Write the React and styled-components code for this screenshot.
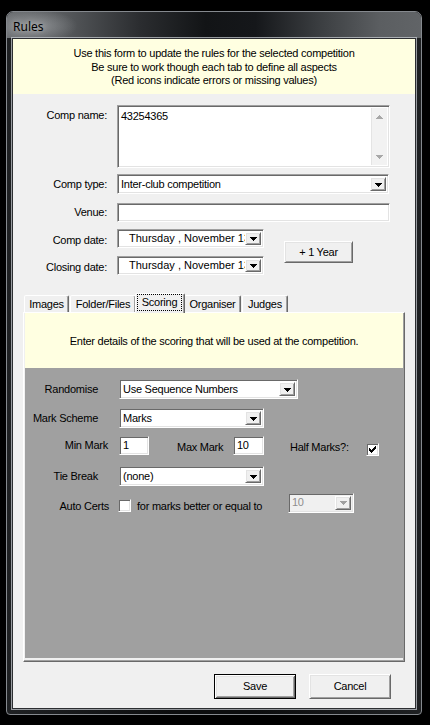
import React from "react";
import styled, { createGlobalStyle, css } from "styled-components";

const GlobalStyle = createGlobalStyle`
  html, body { margin: 0; padding: 0; background: #000; }
  body {
    font-family: "Liberation Sans", Arial, sans-serif;
    font-size: 11px;
    letter-spacing: -0.25px;
    line-height: 13px;
    color: #000;
  }
  *, *::before, *::after { box-sizing: border-box; }
`;

/* classic 3D edges */
const sunken = css`
  border: 1px solid;
  border-color: #a0a0a0 #ffffff #ffffff #a0a0a0;
  box-shadow: inset 1px 1px 0 #696969, inset -1px -1px 0 #e3e3e3;
`;

const raised = css`
  background: #f0f0f0;
  border: 1px solid;
  border-color: #ffffff #696969 #696969 #ffffff;
  box-shadow: inset 1px 1px 0 #e3e3e3, inset -1px -1px 0 #a0a0a0;
`;

const Screen = styled.div`
  width: 430px;
  height: 725px;
  padding: 11px 0 0 6px;
  background: #000;
  overflow: hidden;
`;

const Window = styled.div`
  width: 416px;
  height: 704px;
  display: flex;
  flex-direction: column;
  border: 1px solid #85898e;
  border-radius: 7px 7px 4px 4px;
  overflow: hidden;
  background: linear-gradient(to right, #1f2123 0%, #0c0d0e 40%, #0c0d0e 60%, #1f2123 100%);
`;

const TitleBar = styled.div`
  height: 26px;
  flex: none;
  display: flex;
  align-items: center;
  padding: 2px 0 0 6px;
  background:
    radial-gradient(62px 24px at 27px 14px, rgba(178, 181, 184, 0.6), rgba(178, 181, 184, 0) 70%),
    linear-gradient(to right, #6a6d70 0%, #56595c 14%, #2b2d30 32%, #121416 48%, #15171a 60%, #3c3f42 76%, #5b5e61 90%, #616467 100%);
`;

const Title = styled.span`
  font-family: "Noto Sans", "Open Sans", sans-serif;
  font-size: 12px;
  letter-spacing: 0;
  color: #000;
  text-shadow: 0 0 6px rgba(255, 255, 255, 0.55);
`;

const Client = styled.div`
  flex: 1;
  margin: 0 5px 5px;
  display: flex;
  flex-direction: column;
  background: #f0f0f0;
  border: 1px solid #2c2e31;
  box-shadow: 0 0 0 1px rgba(205, 210, 215, 0.7);
`;

const Banner = styled.div`
  height: ${(p) => p.$h}px;
  flex: none;
  padding-top: ${(p) => p.$pt}px;
  background: #ffffe1;
  text-align: center;
  line-height: 13.5px;
`;

const Form = styled.div`
  display: flex;
  flex-direction: column;
  padding: 11px 25px 0 0;
`;

const FieldRow = styled.div`
  display: flex;
  align-items: ${(p) => (p.$top ? "flex-start" : "center")};
  margin-top: ${(p) => p.$mt || 0}px;
`;

const FieldLabel = styled.span`
  width: 94px;
  flex: none;
  margin-right: 10px;
  text-align: right;
  white-space: nowrap;
  padding-top: ${(p) => p.$pt || 0}px;
`;

const Memo = styled.div`
  ${sunken};
  flex: 1;
  height: 63px;
  background: #fff;
  display: flex;
  padding: 2px;
`;

const MemoText = styled.div`
  flex: 1;
  padding: 2px 1px;
`;

const VScroll = styled.div`
  width: 16px;
  flex: none;
  display: flex;
  flex-direction: column;
  justify-content: space-between;
  background: #f2f2f2;
  border-left: 1px solid #e4e4e4;
`;

const ScrollBtn = styled.span`
  height: 17px;
  display: flex;
  align-items: center;
  justify-content: center;
`;

const Combo = styled.div`
  ${sunken};
  height: ${(p) => p.$h || 20}px;
  width: ${(p) => (p.$w ? `${p.$w}px` : "auto")};
  flex: ${(p) => (p.$w ? "none" : "1")};
  margin-right: ${(p) => p.$mr || 0}px;
  background: ${(p) => (p.$disabled ? "#f0f0f0" : "#fff")};
  display: flex;
  align-items: stretch;
  padding: 2px;
`;

const ComboText = styled.span`
  flex: 1;
  display: flex;
  align-items: center;
  padding-left: ${(p) => p.$pl ?? 1}px;
  white-space: pre;
  overflow: hidden;
  letter-spacing: ${(p) => (p.$wide ? "0" : "inherit")};
  color: ${(p) => (p.$disabled ? "#8e8e8e" : "#000")};
`;

const DropButton = styled.span`
  ${raised};
  width: 16px;
  flex: none;
  display: flex;
  align-items: center;
  justify-content: center;
  padding-top: 1px;
`;

const TextBox = styled.div`
  ${sunken};
  height: 19px;
  width: ${(p) => (p.$w ? `${p.$w}px` : "auto")};
  flex: ${(p) => (p.$w ? "none" : "1")};
  background: #fff;
  display: flex;
  align-items: center;
  padding: 0 3px;
`;

const DateGroup = styled.div`
  display: flex;
  align-items: center;
  margin-top: ${(p) => p.$mt || 0}px;
`;

const DateColumn = styled.div`
  display: flex;
  flex-direction: column;
`;

const PushButton = styled.button`
  ${raised};
  width: ${(p) => p.$w}px;
  height: ${(p) => p.$h}px;
  margin-left: ${(p) => p.$ml || 0}px;
  padding: 0;
  font: inherit;
  letter-spacing: inherit;
  color: #000;
  ${(p) =>
    p.$default &&
    css`
      border-color: #000;
      box-shadow: inset 1px 1px 0 #fff, inset -1px -1px 0 #696969, inset 2px 2px 0 #e3e3e3,
        inset -2px -2px 0 #a0a0a0;
    `}
`;

const TabArea = styled.div`
  display: flex;
  flex-direction: column;
  margin: 18px 10px 0;
`;

const TabStrip = styled.div`
  display: flex;
  align-items: flex-end;
  height: 19px;
  padding-left: 1px;
  gap: 1px;
  position: relative;
  z-index: 2;
`;

const Tab = styled.div`
  width: ${(p) => p.$w + (p.$active ? 4 : 0)}px;
  height: ${(p) => (p.$active ? 20 : 17)}px;
  margin: 0 ${(p) => (p.$active ? -2 : 0)}px ${(p) => (p.$active ? -1 : 0)}px;
  position: relative;
  z-index: ${(p) => (p.$active ? 2 : 1)};
  background: #f0f0f0;
  border: 1px solid;
  border-bottom: none;
  border-color: #fff #696969 transparent #fff;
  border-radius: 2px 2px 0 0;
  box-shadow: inset -1px 0 0 #a0a0a0;
  display: flex;
  align-items: ${(p) => (p.$active ? "stretch" : "center")};
  justify-content: center;
  padding: ${(p) => (p.$active ? "0 2px 2px 1px" : "1px 0 0")};
`;

const FocusRect = styled.span`
  flex: 1;
  display: flex;
  align-items: center;
  justify-content: center;
  border: 1px dotted #000;
  padding-bottom: 1px;
`;

const TabPanel = styled.div`
  height: 350px;
  display: flex;
  flex-direction: column;
  background: #f0f0f0;
  border: 1px solid;
  border-color: #fff #696969 #696969 #fff;
  box-shadow: inset -1px -1px 0 #a0a0a0;
  padding: 0 1px 3px 1px;
`;

const ScorePane = styled.div`
  flex: 1;
  background: #a0a0a0;
  display: flex;
  flex-direction: column;
`;

const ScoreRow = styled.div`
  display: flex;
  align-items: center;
  margin-top: ${(p) => p.$mt || 0}px;
`;

const ScoreLabel = styled.span`
  width: ${(p) => p.$w || 94}px;
  flex: none;
  text-align: ${(p) => p.$align || "right"};
  white-space: nowrap;
  margin-left: ${(p) => p.$ml || 0}px;
  padding-right: ${(p) => p.$pr || 0}px;
  padding-top: ${(p) => p.$pt || 0}px;
`;

const CheckBox = styled.span`
  ${sunken};
  width: 13px;
  height: 13px;
  flex: none;
  background: #fff;
  display: flex;
  align-items: center;
  justify-content: center;
  margin-left: ${(p) => p.$ml || 0}px;
  margin-top: ${(p) => p.$mt || 0}px;
`;

const ButtonRow = styled.div`
  display: flex;
  justify-content: flex-end;
  gap: 13px;
  margin-top: 12px;
  padding-right: 24px;
`;

function Arrow({ up = false, color = "#000" }) {
  const d = up
    ? "M3 0h1v1H3z M2 1h3v1H2z M1 2h5v1H1z M0 3h7v1H0z"
    : "M0 0h7v1H0z M1 1h5v1H1z M2 2h3v1H2z M3 3h1v1H3z";
  return (
    <svg width="7" height="4" viewBox="0 0 7 4" shapeRendering="crispEdges">
      <path d={d} fill={color} />
    </svg>
  );
}

function Tick() {
  return (
    <svg width="7" height="7" viewBox="0 0 7 7" shapeRendering="crispEdges">
      <path
        d="M6 0h1v1H6z M5 1h2v1H5z M0 2h1v1H0z M4 2h3v1H4z M0 3h2v1H0z M3 3h3v1H3z M0 4h5v1H0z M1 5h3v1H1z M2 6h1v1H2z"
        fill="#000"
      />
    </svg>
  );
}

function DropDown({ text, w, mr, disabled }) {
  return (
    <Combo $w={w} $mr={mr} $disabled={disabled}>
      <ComboText $disabled={disabled}>{text}</ComboText>
      <DropButton>
        <Arrow color={disabled ? "#a0a0a0" : "#000"} />
      </DropButton>
    </Combo>
  );
}

function DatePicker({ text }) {
  return (
    <Combo $w={147} $h={19}>
      <ComboText $pl={9} $wide>
        {text}
      </ComboText>
      <DropButton>
        <Arrow />
      </DropButton>
    </Combo>
  );
}

const tabs = [
  { label: "Images", w: 45 },
  { label: "Folder/Files", w: 66 },
  { label: "Scoring", w: 46, active: true },
  { label: "Organiser", w: 57 },
  { label: "Judges", w: 46 },
];

export default function App() {
  return (
    <>
      <GlobalStyle />
      <Screen>
        <Window>
          <TitleBar>
            <Title>Rules</Title>
          </TitleBar>
          <Client>
            <Banner $h={55} $pt={8}>
              Use this form to update the rules for the selected competition
              <br />
              Be sure to work though each tab to define all aspects
              <br />
              (Red icons indicate errors or missing values)
            </Banner>

            <Form>
              <FieldRow $top>
                <FieldLabel $pt={4}>Comp name:</FieldLabel>
                <Memo>
                  <MemoText>43254365</MemoText>
                  <VScroll>
                    <ScrollBtn>
                      <Arrow up color="#a8a8a8" />
                    </ScrollBtn>
                    <ScrollBtn>
                      <Arrow color="#a8a8a8" />
                    </ScrollBtn>
                  </VScroll>
                </Memo>
              </FieldRow>
              <FieldRow $mt={6}>
                <FieldLabel>Comp type:</FieldLabel>
                <DropDown text="Inter-club competition" mr={1} />
              </FieldRow>
              <FieldRow $mt={9}>
                <FieldLabel>Venue:</FieldLabel>
                <TextBox />
              </FieldRow>
              <DateGroup $mt={7}>
                <DateColumn>
                  <FieldRow>
                    <FieldLabel $pt={4}>Comp date:</FieldLabel>
                    <DatePicker text="Thursday , November 13, 2014" />
                  </FieldRow>
                  <FieldRow $mt={8}>
                    <FieldLabel $pt={4}>Closing date:</FieldLabel>
                    <DatePicker text="Thursday , November 13, 2014" />
                  </FieldRow>
                </DateColumn>
                <PushButton $w={69} $h={22} $ml={20}>
                  + 1 Year
                </PushButton>
              </DateGroup>
            </Form>

            <TabArea>
              <TabStrip>
                {tabs.map((t) => (
                  <Tab key={t.label} $w={t.w} $active={t.active}>
                    {t.active ? <FocusRect>{t.label}</FocusRect> : t.label}
                  </Tab>
                ))}
              </TabStrip>
              <TabPanel>
                <Banner $h={55} $pt={22}>
                  Enter details of the scoring that will be used at the competition.
                </Banner>
                <ScorePane>
                  <ScoreRow $mt={11}>
                    <ScoreLabel $pr={21}>Randomise</ScoreLabel>
                    <DropDown text="Use Sequence Numbers" w={179} />
                  </ScoreRow>
                  <ScoreRow $mt={9}>
                    <ScoreLabel $pr={21}>Mark Scheme</ScoreLabel>
                    <DropDown text="Marks" w={145} />
                  </ScoreRow>
                  <ScoreRow $mt={6}>
                    <ScoreLabel $pr={11}>Min Mark</ScoreLabel>
                    <TextBox $w={30}>1</TextBox>
                    <ScoreLabel $w={56} $align="left" $ml={28} $pt={5}>
                      Max Mark
                    </ScoreLabel>
                    <TextBox $w={31}>10</TextBox>
                    <ScoreLabel $w={76} $align="left" $ml={26} $pt={5}>
                      Half Marks?:
                    </ScoreLabel>
                    <CheckBox $mt={9}>
                      <Tick />
                    </CheckBox>
                  </ScoreRow>
                  <ScoreRow $mt={10}>
                    <ScoreLabel $pr={21}>Tie Break</ScoreLabel>
                    <DropDown text="(none)" w={145} />
                  </ScoreRow>
                  <ScoreRow $mt={6}>
                    <ScoreLabel $pr={10} $pt={8}>
                      Auto Certs
                    </ScoreLabel>
                    <CheckBox $ml={-1} $mt={5} />
                    <ScoreLabel $w={151} $align="left" $ml={6} $pt={8}>
                      for marks better or equal to
                    </ScoreLabel>
                    <DropDown text="10" w={66} disabled />
                  </ScoreRow>
                </ScorePane>
              </TabPanel>
            </TabArea>

            <ButtonRow>
              <PushButton $w={82} $h={25} $default>
                Save
              </PushButton>
              <PushButton $w={82} $h={25}>
                Cancel
              </PushButton>
            </ButtonRow>
          </Client>
        </Window>
      </Screen>
    </>
  );
}
